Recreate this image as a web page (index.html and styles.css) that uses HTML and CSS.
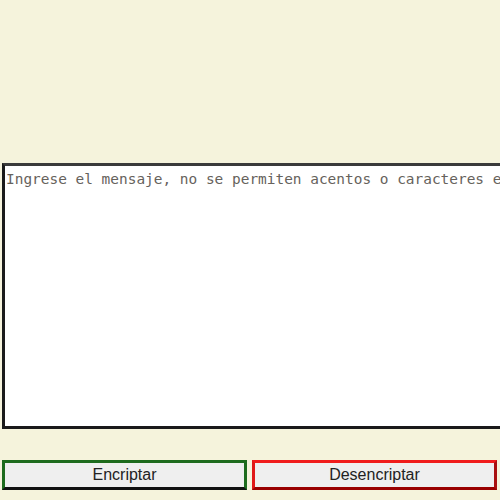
FILE: index.html
```html
<!DOCTYPE html>
<html lang="es">
<head>
<meta charset="utf-8">
<title>Encriptador</title>
<link rel="stylesheet" href="styles.css">
</head>
<body>
<main class="app">
  <div class="editor">
    <textarea class="message" placeholder="Ingrese el mensaje, no se permiten acentos o caracteres especiales"></textarea>
  </div>
  <div class="actions">
    <button class="btn btn-encrypt" type="button">Encriptar</button>
    <button class="btn btn-decrypt" type="button">Desencriptar</button>
  </div>
</main>
</body>
</html>
```
FILE: styles.css
```css
html, body {
  margin: 0;
  padding: 0;
  background: #f5f3dc;
  overflow: hidden;
}
.app {
  display: flex;
  flex-direction: column;
  padding: 163px 0 0 2px;
  width: 498px;
}
.editor {
  width: 498px;
  height: 266px;
  overflow: hidden;
}
.message {
  display: block;
  box-sizing: border-box;
  width: 900px;
  height: 266px;
  margin: 0;
  padding: 5px 1px;
  border: 3px solid #1a1a1a;
  border-top-color: #3a3a3a;
  background: #fff;
  resize: none;
  font-family: "DejaVu Sans Mono", monospace;
  font-size: 14.45px;
  line-height: 17px;
  color: #555;
}
.message::placeholder {
  color: #66625c;
}
.actions {
  display: grid;
  grid-template-columns: 1fr 1fr;
  gap: 5px;
  margin-top: 31px;
  width: 495px;
}
.btn {
  box-sizing: border-box;
  height: 30px;
  margin: 0;
  padding: 0;
  background: #efefef;
  font-family: "Liberation Sans", Arial, sans-serif;
  font-size: 16px;
  color: #222;
  border: 3px solid;
}
.btn-encrypt {
  border-color: #1d6b1d #1d6b1d #111 #1d6b1d;
}
.btn-decrypt {
  border-color: #f01c1c #a81010 #900 #e01818;
}
```
